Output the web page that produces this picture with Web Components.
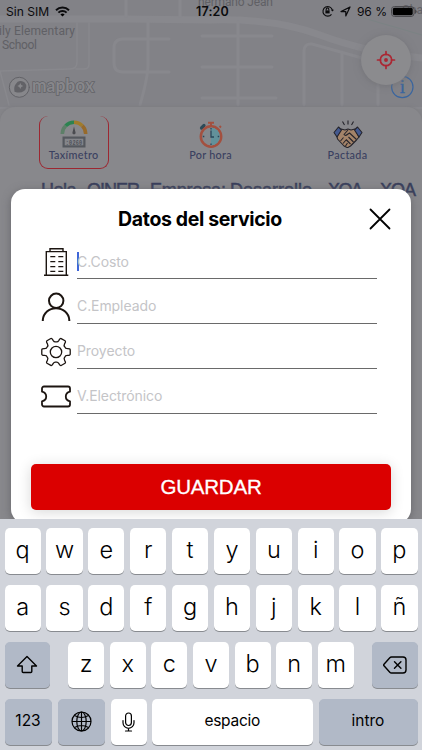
<!DOCTYPE html>
<html lang="es">
<head>
<meta charset="utf-8">
<meta name="viewport" content="width=device-width">
<title>Datos del servicio</title>
<style>
  body {
    margin: 0;
    font-family: Inter, "Liberation Sans", sans-serif;
    overflow: hidden;
  }
</style>
</head>
<body>
<taxi-screen>
  <map-view slot="page"></map-view>
  <status-bar slot="page"></status-bar>
  <service-panel slot="page">
    <service-tab label="Taxímetro" icon="meter" selected></service-tab>
    <service-tab label="Por hora" icon="watch"></service-tab>
    <service-tab label="Pactada" icon="hands"></service-tab>
  </service-panel>
  <service-dialog slot="dialog" heading="Datos del servicio" action="GUARDAR">
    <form-field icon="building" placeholder="C.Costo" active></form-field>
    <form-field icon="person" placeholder="C.Empleado"></form-field>
    <form-field icon="gear" placeholder="Proyecto"></form-field>
    <form-field icon="ticket" placeholder="V.Electrónico"></form-field>
  </service-dialog>
  <soft-keyboard slot="keyboard"></soft-keyboard>
</taxi-screen>

<script>
const gear = () => {
  // six teeth around a ring, centred on 0,0
  const at = (a, r) => {
    const t = a * Math.PI / 180;
    return `${(r * Math.cos(t)).toFixed(2)} ${(r * Math.sin(t)).toFixed(2)}`;
  };
  let d = `M${at(-30, 10.2)}`;
  for (let a = 0; a < 360; a += 60) {
    d += `Q${at(a - 20, 9.8)} ${at(a - 16, 12)}Q${at(a - 13.500, 14.600)} ${at(a - 9, 14.4)}`;
    d += `L${at(a + 9, 14.4)}Q${at(a + 13.500, 14.600)} ${at(a + 16, 12)}Q${at(a + 20, 9.8)} ${at(a + 30, 10.2)}`;
  }
  return `${d}Z`;
};

const ICONS = {
  building: /* html */`<svg width="30" height="30" viewBox="0 0 30 30" fill="none" stroke="#1c1511" stroke-width="1.4">
    <path d="M5.300 28V4.600h20V28M3 28.200h24.300M9 4.400V1.700h13v2.700"/>
    <path d="M9.300 9.600h5m3 0h5m-13 5h5m3 0h5m-13 5h5m3 0h5m-13 4.800h5m3 0h5"/></svg>`,
  person: /* html */`<svg width="30" height="30" viewBox="0 0 30 30" fill="none" stroke="#1c1511" stroke-width="2">
    <circle cx="15.200" cy="8.800" r="7.200"/>
    <path d="M1.800 29v-1C2.300 21 8 16.200 15 16.200S27.900 21 28.300 28v1"/></svg>`,
  gear: /* html */`<svg width="30" height="30" viewBox="-15 -15 30 30" fill="none" stroke="#1c1511" stroke-width="1.300" stroke-linejoin="round">
    <path d="${gear()}"/><circle r="5.700"/></svg>`,
  ticket: /* html */`<svg width="30" height="30" viewBox="0 0 30 30" fill="none" stroke="#1c1511" stroke-width="1.800" stroke-linejoin="round">
    <path d="M3 4.500h24a2 2 0 0 1 2 2v3.200q-4.200 1-4.200 4.800t4.200 4.800v3.200a2 2 0 0 1-2 2H3a2 2 0 0 1-2-2v-3.200q4.200-1 4.200-4.800T1 9.700V6.500a2 2 0 0 1 2-2Z"/></svg>`,
  meter: /* html */`<svg width="28" height="28" viewBox="0 0 28 28" fill="none">
    <g stroke-width="3.600">
      <path d="M2.300 14a11.700 11.700 0 0 1 3.400-8.300" stroke="#5d7f68"/>
      <path d="M5.700 5.700A11.700 11.700 0 0 1 14 2.300" stroke="#2c8350"/>
      <path d="M14 2.300a11.700 11.700 0 0 1 8.300 3.400" stroke="#a07c2c"/>
      <path d="M22.300 5.700a11.700 11.700 0 0 1 3.400 8.300" stroke="#976a2b"/>
    </g>
    <path d="m14 6.500 1.500 5.700a1.600 1.600 0 1 1-3 0Z" fill="#4a4b50"/>
    <path d="M2.500 16.500h23v11h-23z" fill="#55585e"/><path d="M4.700 18.700h18.600v6.600H4.700z" fill="#84858a"/>
    <text x="5.800" y="24.500" font-family="Liberation Mono" font-weight="700" font-size="7" textLength="16.500" lengthAdjust="spacingAndGlyphs" fill="#50535a">:0260</text></svg>`,
  watch: /* html */`<svg width="28" height="28" viewBox="0 0 28 28" fill="none">
    <path d="M11 2.700h6M14 3v3" stroke="#a3503f" stroke-width="2"/>
    <path d="M4.500 8 7 5.500" stroke="#2b4a58" stroke-width="3.200" stroke-linecap="round"/>
    <path d="m22.500 6 1.500 1.500" stroke="#a3503f" stroke-width="1.800"/>
    <circle cx="14" cy="16.500" r="10.200" fill="#85898d" stroke="#a3503f" stroke-width="2.500"/>
    <path d="M14 7.600a8.900 8.900 0 0 1 0 17.800Z" fill="#62919a"/>
    <path d="M14 10.500V17h3M14 8v1.500M14 23.500V25M5.800 16.500h1.500M20.700 16.500h1.500" stroke="#28475a" stroke-width="1.300"/></svg>`,
  hands: /* html */`<svg width="30" height="28" viewBox="0 0 30 28" fill="none" stroke="#25242b" stroke-width="1.100" stroke-linejoin="round">
    <path d="M15 .500v4M9.500 1.500l2 3.500M20.500 1.500l-2 3.500"/>
    <path d="M8 9l4 1 3-1 3 1 4-1 4 8-2.500 3-6 6-3 1.700-3.500-1.700L4.500 19 4 16.500Z" fill="#a38369"/>
    <path d="m5.500 7 3 3-4.500 7L1 12.500ZM24.500 7l-3 3 4.500 7 3-4.500Z" fill="#44598f"/>
    <path d="m15 10-4 4.500q1.500 2 4-.500l1.500-1 7 6.500M15.500 17l5 5M13 19.500l4.500 4.500M7.500 21l3-3.500M10 23.500l3-3.500M12.500 26l2-3"/></svg>`,
};

class TaxiScreen extends HTMLElement {
  constructor() {
    super();
    this.attachShadow({ mode: "open" }).innerHTML = /* html */`
    <style>
      :host {
        display: grid;
        grid-template: 750px / 422px;
        overflow: hidden;
        background: #858589;
      }
      .layer { grid-area: 1 / 1; min-height: 0; }
      .page { display: grid; grid-template-rows: 22px 85px 1fr; }
      ::slotted(map-view) { grid-area: 1 / 1 / 3 / 2; }
      ::slotted(status-bar) { grid-area: 1 / 1; z-index: 1; }
      ::slotted(service-panel) { grid-area: 3 / 1; z-index: 1; }
      .dialog { padding: 189px 11px 0; z-index: 2; }
      .keyboard { align-self: end; z-index: 3; }
    </style>
    <div class="layer page"><slot name="page"></slot></div>
    <div class="layer dialog"><slot name="dialog"></slot></div>
    <div class="layer keyboard"><slot name="keyboard"></slot></div>`;
  }
}

class StatusBar extends HTMLElement {
  constructor() {
    super();
    this.attachShadow({ mode: "open" }).innerHTML = /* html */`
    <style>
      :host {
        display: grid;
        grid-template-columns: 1fr auto 1fr;
        align-items: center;
        padding: 0 5px 0 6px;
        font-size: 12.100px;
        color: #0b0b0d;
      }
      div { display: flex; align-items: center; }
      .left { gap: 6px; }
      .time { font-weight: 600; font-size: 12.500px; letter-spacing: .200px; padding-left: 2px; }
      .right { justify-content: flex-end; }
      .pct { margin: 0 4px 0 6px; letter-spacing: -.050px; }
      svg { display: block; }
    </style>
    <div class="left"><span>Sin SIM</span>
      <svg width="15" height="11" viewBox="0 0 15 11"><path d="M1 4.200a9.300 9.300 0 0 1 13 0" fill="none" stroke="#0b0b0d" stroke-width="2"/><path d="M3.400 6.700a5.800 5.800 0 0 1 8.200 0" fill="none" stroke="#0b0b0d" stroke-width="1.900"/><path d="M7.500 10.600 5.400 8.500a3 3 0 0 1 4.200 0Z"/></svg>
    </div>
    <div class="time">17:20</div>
    <div class="right">
      <svg width="12" height="12" viewBox="0 0 12 12" fill="none" stroke="#0b0b0d" stroke-width="1.100"><path d="M9.500 9.300A4.800 4.800 0 1 1 10.400 5"/><path d="m8.800 4.800 1.700 1.800L12 4.800Z" fill="#0b0b0d" stroke="none"/><path d="M3.400 5.400h4.200v3H3.400z" fill="#0b0b0d" stroke="none"/><path d="M4.200 5.500V4.200a1.300 1.300 0 0 1 2.600 0v1.300"/></svg>
      <svg style="margin-left:6px" width="11" height="11" viewBox="0 0 11 11" fill="none" stroke="#0b0b0d" stroke-width="1.200" stroke-linejoin="round"><path d="M1 5.600 10 1 5.800 10V5.600Z"/></svg>
      <span class="pct">96 %</span>
      <svg width="26" height="11" viewBox="0 0 26 11"><rect x=".500" y=".500" width="22.500" height="10" rx="3" fill="none" stroke="#4a4a4e"/><rect x="1.800" y="1.800" width="19.900" height="7.400" rx="1.600"/><path d="M24 3.500q1.700.5 1.700 2t-1.700 2Z" fill="#4a4a4e"/></svg>
    </div>`;
  }
}

class MapView extends HTMLElement {
  constructor() {
    super();
    this.attachShadow({ mode: "open" }).innerHTML = /* html */`
    <style>
      :host { display: block; position: relative; background: #828287; }
      svg { display: block; }
      .locate {
        position: absolute;
        left: 361px;
        top: 35px;
        width: 50px;
        height: 50px;
        border-radius: 50%;
        background: #8b8b8e;
        box-shadow: 0 1px 7px #737378;
        display: grid;
        place-items: center;
      }
    </style>
    <svg width="422" height="117" viewBox="0 0 422 117" fill="none" stroke="#88888d" stroke-width="3" stroke-linecap="round">
      <path stroke-width="7" d="M0 19h125l85 1q65-2 110 15t102 23"/>
      <path stroke-width="1.500" d="M77 23v39q0 7-7 7L0 71l9 34M89 23v41q0 5-5 5h-8"/>
      <path stroke-width="3" d="M148 20v45q0 12-8 40M169 39h-46q-9 0-9 9v15q0 9 9 9h46M126-2v18M180-2v18"/>
      <path stroke-width="3" d="M238 22v83M202 36h70M202 67h70M202 98h74M304 105V52q0-9 8-8l50 14M342 52v53M378 75v30"/>
      <path stroke-width="2" d="M0 108h422"/>
      <path stroke="#7b8384" stroke-width="1" d="M360 17l62 18"/>
      <g stroke="none" fill="#606065" font-family="Roboto, sans-serif" font-size="12">
        <text x="-1" y="34.500" textLength="76">ily Elementary</text>
        <text x="2" y="49" textLength="35">School</text>
        <text x="198" y="5.500" textLength="75">hermano Jean</text>
        <text x="402" y="13.500">Cha</text>
      </g>
      <g stroke="#626267" stroke-width="1">
        <circle cx="19.300" cy="87.300" r="10" fill="#87878b"/>
        <path fill="#626267" stroke="none" d="M14.500 91.700q-1-5.500 1.500-8a5.500 5.500 0 1 1 7.500 7.500q-3 2.500-9 .500Z"/>
        <path fill="#87878b" stroke="none" d="m20.300 83 1 2 2 1-2 1-1 2-1-2-2-1 2-1Z"/>
        <text x="32" y="92" font-family="Lato, sans-serif" font-weight="700" font-size="18" textLength="62" lengthAdjust="spacingAndGlyphs" fill="#87878b" stroke="#626267" stroke-width="1.500" paint-order="stroke">mapbox</text>
      </g>
      <circle cx="402.300" cy="87" r="10.700" stroke="#39659f" stroke-width="1.200"/>
      <text x="402.300" y="93" text-anchor="middle" font-family="Liberation Serif, serif" font-size="19" fill="#39659f" stroke="#39659f" stroke-width=".300">i</text>
    </svg>
    <div class="locate"><svg width="20" height="20" viewBox="0 0 20 20" fill="none" stroke="#ab2733" stroke-width="1.700" stroke-linecap="round"><circle cx="10" cy="10" r="5.700"/><circle cx="10" cy="10" r="1.100" fill="#ab2733"/><path d="M10 1.500v3M10 15.500v3M1.500 10h3M15.500 10h3"/></svg></div>`;
  }
}

class ServicePanel extends HTMLElement {
  constructor() {
    super();
    this.attachShadow({ mode: "open" }).innerHTML = /* html */`
    <style>
      :host {
        display: block;
        background: #88888c;
        border-radius: 15px 15px 0 0;
        box-shadow: 0 -1px 3px #7d7d82;
      }
      .tabs {
        display: grid;
        grid-template-columns: 70px 70px 70px;
        column-gap: 67px;
        padding: 8.500px 0 0 38.500px;
      }
      .greeting { display: block; margin-top: 7px; }
    </style>
    <div class="tabs"><slot></slot></div>
    <svg class="greeting" width="422" height="30" font-family="Liberation Sans, sans-serif" font-size="18" fill="#383e5b" stroke="#383e5b" stroke-width=".500">
      <text x="41" y="19.500" textLength="40">Hola,</text>
      <text x="87" y="19.500" textLength="57">OINER.</text>
      <text x="150" y="19.500" textLength="76">Empresa:</text>
      <text x="230" y="19.500" textLength="82">Desarrollo</text>
      <text x="316" y="19.500">-</text>
      <text x="328" y="19.500" textLength="35">XOA</text>
      <text x="369" y="19.500">-</text>
      <text x="380" y="19.500" textLength="36">XOA</text>
    </svg>`;
  }
}

class ServiceTab extends HTMLElement {
  constructor() {
    super();
    this.attachShadow({ mode: "open" });
  }

  connectedCallback() {
    this.shadowRoot.innerHTML = /* html */`
    <style>
      :host {
        box-sizing: border-box;
        display: flex;
        flex-direction: column;
        align-items: center;
        height: 53px;
        padding-top: 4px;
        border: 1.500px solid transparent;
        border-top: 0;
        border-radius: 9px;
        font: 500 10.800px/14px Lato, sans-serif;
        letter-spacing: .300px;
        color: #3a4060;
      }
      :host([selected]) { border-color: #9c2731; }
      svg { display: block; }
    </style>
    ${ICONS[this.getAttribute("icon")]}
    <span>${this.getAttribute("label")}</span>`;
  }
}

class ServiceDialog extends HTMLElement {
  constructor() {
    super();
    this.attachShadow({ mode: "open" });
  }

  connectedCallback() {
    this.shadowRoot.innerHTML = /* html */`
    <style>
      :host {
        box-sizing: border-box;
        display: flex;
        flex-direction: column;
        height: 334px;
        padding: 0 20px 13px;
        border-radius: 14px;
        background: #fff;
        box-shadow: 0 2px 8px #66666b;
      }
      header {
        display: grid;
        grid-template-columns: 1fr 22px;
        align-items: center;
        height: 60px;
      }
      h1 {
        margin: 0;
        font-size: 19.500px;
        font-weight: 700;
        letter-spacing: -.350px;
        text-align: center;
        color: #000;
      }
      .fields { flex: 1; padding: 0 14px 0 10px; }
      button {
        height: 46px;
        border: 0;
        border-radius: 5px;
        background: #db0000;
        box-shadow: 0 2px 14px rgba(0, 0, 0, .16);
        color: #fff;
        font: 20.500px "Liberation Sans", sans-serif;
        letter-spacing: -.200px;
        -webkit-text-stroke: .300px #fff;
      }
    </style>
    <header>
      <h1>${this.getAttribute("heading")}</h1>
      <svg width="22" height="22" viewBox="0 0 22 22" stroke="#000" stroke-width="1.800" stroke-linecap="round"><path d="m1.500 1.500 19 19m0-19-19 19"/></svg>
    </header>
    <div class="fields"><slot></slot></div>
    <button>${this.getAttribute("action")}</button>`;
  }
}

class FormField extends HTMLElement {
  constructor() {
    super();
    this.attachShadow({ mode: "open" });
  }

  connectedCallback() {
    this.shadowRoot.innerHTML = /* html */`
    <style>
      :host {
        display: grid;
        grid-template-columns: 30px 1fr;
        column-gap: 6px;
        height: 44.900px;
      }
      .icon { margin-top: -2px; }
      .icon svg { display: block; }
      .line {
        display: flex;
        align-items: center;
        box-sizing: border-box;
        height: 35px;
        margin-top: -5px;
        border-bottom: 1px solid #6a6a6a;
        font-size: 14px;
        letter-spacing: -.080px;
        color: #c4c4c7;
      }
      .caret { width: 2px; height: 19px; margin-right: -2px; background: #3f66d8; }
    </style>
    <div class="icon">${ICONS[this.getAttribute("icon")]}</div>
    <div class="line">${this.hasAttribute("active") ? "<span class=\"caret\"></span>" : ""}<span>${this.getAttribute("placeholder")}</span></div>`;
  }
}

class KeyCap extends HTMLElement {
  constructor() {
    super();
    this.attachShadow({ mode: "open" }).innerHTML = /* html */`
    <style>
      :host {
        display: flex;
        align-items: center;
        justify-content: center;
        box-sizing: border-box;
        height: 46px;
        padding-bottom: 3px;
        border-radius: 5px;
        background: #fff;
        box-shadow: 0 1px 0 #888b90;
        color: #000;
        font-size: 23.500px;
        font-weight: 350;
      }
      :host([dark]) { background: #b1b9c7; }
      :host([small]) { font-size: 15.500px; font-weight: 400; }
      :host([icon]) { padding-bottom: 0; }
      ::slotted(svg) { display: block; }
    </style>
    <slot></slot>`;
  }
}

class SoftKeyboard extends HTMLElement {
  constructor() {
    super();
    this.attachShadow({ mode: "open" });
  }

  connectedCallback() {
    const keys = (letters) => [...letters].map((l) => `<key-cap>${l}</key-cap>`).join("");
    this.shadowRoot.innerHTML = /* html */`
    <style>
      :host {
        box-sizing: border-box;
        display: flex;
        flex-direction: column;
        gap: 11.100px;
        height: 231px;
        padding: 8.500px 4.500px 0;
        background: #d1d4db;
      }
      .row { display: grid; grid-template-columns: repeat(10, 1fr); column-gap: 5.700px; }
      .third { grid-template-columns: 45.700px 1fr 45.700px; column-gap: 18px; }
      .letters { display: grid; grid-template-columns: repeat(7, 1fr); column-gap: 5.700px; }
      .last { grid-template-columns: 47px 47px 36px 1fr 99px; column-gap: 6px; }
      .last .bar { margin-left: -.500px; }
      .narrow { letter-spacing: -.250px; }
    </style>
    <div class="row">${keys("qwertyuiop")}</div>
    <div class="row">${keys("asdfghjklñ")}</div>
    <div class="row third">
      <key-cap dark icon><svg width="22" height="19" viewBox="0 0 22 19" fill="none" stroke="#000" stroke-width="1.400" stroke-linejoin="round"><path d="M11 1.500 20.500 11h-4.700v5.500q0 1-1 1H7.200q-1 0-1-1V11H1.500Z"/></svg></key-cap>
      <div class="letters">${keys("zxcvbnm")}</div>
      <key-cap dark icon><svg width="24" height="18" viewBox="0 0 24 18" fill="none" stroke="#000" stroke-width="1.400" stroke-linejoin="round" stroke-linecap="round"><path d="M8.500 1H20q3 0 3 3v10q0 3-3 3H8.500Q7.500 17 6.800 16.200L1 9.800q-.700-.800 0-1.600l5.800-6.400Q7.500 1 8.500 1ZM11.500 5.800l6.400 6.400m0-6.400-6.400 6.400"/></svg></key-cap>
    </div>
    <div class="row last">
      <key-cap dark small>123</key-cap>
      <key-cap dark icon><svg width="21" height="21" viewBox="0 0 21 21" fill="none" stroke="#000" stroke-width="1.200"><circle cx="10.500" cy="10.500" r="9.500"/><ellipse cx="10.500" cy="10.500" rx="4.700" ry="9.500"/><path d="M10.500 1v19M1 10.500h19M3.500 4.500q7 4 14 0M3.500 16.500q7-4 14 0"/></svg></key-cap>
      <key-cap icon><svg width="13" height="20" viewBox="0 0 13 20" fill="none" stroke="#000" stroke-width="1.200" stroke-linecap="round"><rect x="3.600" y="1" width="5.800" height="12.500" rx="2.900"/><path d="M1 8.500v2.300a5.500 5.500 0 0 0 11 0V8.500M6.500 16.300V19M3.500 19h6"/></svg></key-cap>
      <key-cap small class="bar narrow">espacio</key-cap>
      <key-cap dark small>intro</key-cap>
    </div>`;
  }
}

customElements.define("taxi-screen", TaxiScreen);
customElements.define("status-bar", StatusBar);
customElements.define("map-view", MapView);
customElements.define("service-panel", ServicePanel);
customElements.define("service-tab", ServiceTab);
customElements.define("service-dialog", ServiceDialog);
customElements.define("form-field", FormField);
customElements.define("key-cap", KeyCap);
customElements.define("soft-keyboard", SoftKeyboard);
</script>
</body>
</html>
